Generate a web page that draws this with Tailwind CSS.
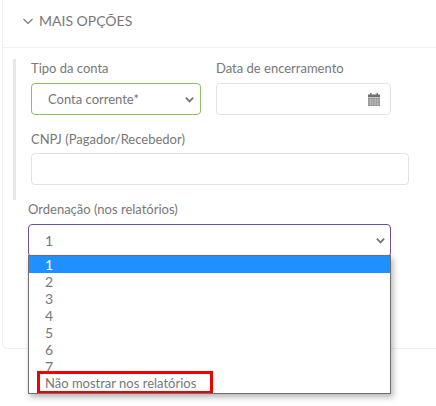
<!DOCTYPE html>
<html lang="en">
<head>
  <meta charset="UTF-8">
  <title>Mais opções</title>
  <script src="https://cdn.jsdelivr.net/npm/@tailwindcss/browser@4"></script>
</head>
<body class="bg-white w-[436px] h-[406px] overflow-hidden font-['Lato','Noto_Sans',sans-serif] text-[13px] text-[#777]">
  <div class="ml-[2px] h-[349px] border-l border-b border-[#f0f0f6] rounded-bl-[6px]">
    <div class="h-[48px] border-b border-[#f0f0f0] pl-[18px] pb-[6px] flex items-center gap-[4px]">
      <svg class="w-[14px] h-[14px]" viewBox="0 0 14 14" fill="none" stroke="#777" stroke-width="1.2"><path d="M2.5 5l4.5 4.5L11.5 5"/></svg>
      <span class="text-[14px] leading-[20px]">MAIS OPÇÕES</span>
    </div>
    <div class="pl-[10px]">
      <div class="mt-[11px] border-l-[3px] border-[#e8e8e8] h-[141px] pl-[15px]">
        <div class="flex gap-[15px]">
          <div class="w-[170px]">
            <div class="-mt-[1px] leading-[20px] mb-[5px]">Tipo da conta</div>
            <div class="h-[32px] border border-[#8fbf5f] rounded-[4px] flex items-center justify-between pl-[16px] pr-[5px]">
              <span class="pt-[1px]">Conta corrente*</span>
              <svg class="w-[11px] h-[11px]" viewBox="0 0 12 12" fill="none" stroke="#777" stroke-width="2"><path d="M2 4l4 4 4-4"/></svg>
            </div>
          </div>
          <div class="w-[175px]">
            <div class="-mt-[1px] leading-[20px] mb-[5px]">Data de encerramento</div>
            <div class="h-[32px] border border-[#e3e3e3] rounded-[4px] flex items-center justify-end pr-[10px]">
              <svg class="w-[12px] h-[13px]" viewBox="0 0 12 13">
                <path fill="#6f6f6f" d="M0 1.5h2V0h1.5v1.5h5V0H10v1.5h2V4H0z"/>
                <path fill="#8a8a8a" d="M0 4.5h12V13H0z"/>
                <path stroke="#cfcfcf" stroke-width=".6" fill="none" d="M0 7h12M0 9h12M0 11h12M2.4 5v8M4.8 5v8M7.2 5v8M9.6 5v8"/>
              </svg>
            </div>
          </div>
        </div>
        <div class="leading-[20px] mt-[14px] mb-[4px]">CNPJ (Pagador/Recebedor)</div>
        <div class="h-[32px] w-[378px] border border-[#e3e3e3] rounded-[4px]"></div>
      </div>
      <div class="relative ml-[15px] mt-[-1px] w-[363px]">
        <div class="leading-[20px] mb-[5px]">Ordenação (nos relatórios)</div>
        <div class="h-[33px] border border-[#6b4fa0] rounded-[4px] flex items-center justify-between pl-[16px] pr-[4px]">
          <span class="text-[14px]">1</span>
          <svg class="w-[11px] h-[11px]" viewBox="0 0 12 12" fill="none" stroke="#777" stroke-width="2"><path d="M2 4l4 4 4-4"/></svg>
        </div>
        <div class="absolute left-0 top-[56px] w-[363px] h-[139px] bg-white border border-[#6f6f6f] shadow-[2px_3px_6px_rgba(0,0,0,0.3)] text-[14px] leading-[17px] overflow-hidden">
          <div class="h-[17px] pl-[16px] bg-[#1e90ff] text-white">1</div>
          <div class="h-[17px] pl-[16px]">2</div>
          <div class="h-[17px] pl-[16px]">3</div>
          <div class="h-[17px] pl-[16px]">4</div>
          <div class="h-[17px] pl-[16px]">5</div>
          <div class="h-[17px] pl-[16px]">6</div>
          <div class="h-[17px] pl-[16px]">7</div>
          <div class="h-[17px] pl-[16px] text-[13px]">Não mostrar nos relatórios</div>
          <div class="absolute left-[8px] top-[115px] w-[176px] h-[23px] border-[3px] border-[#f00000]"></div>
        </div>
      </div>
    </div>
  </div>
</body>
</html>
